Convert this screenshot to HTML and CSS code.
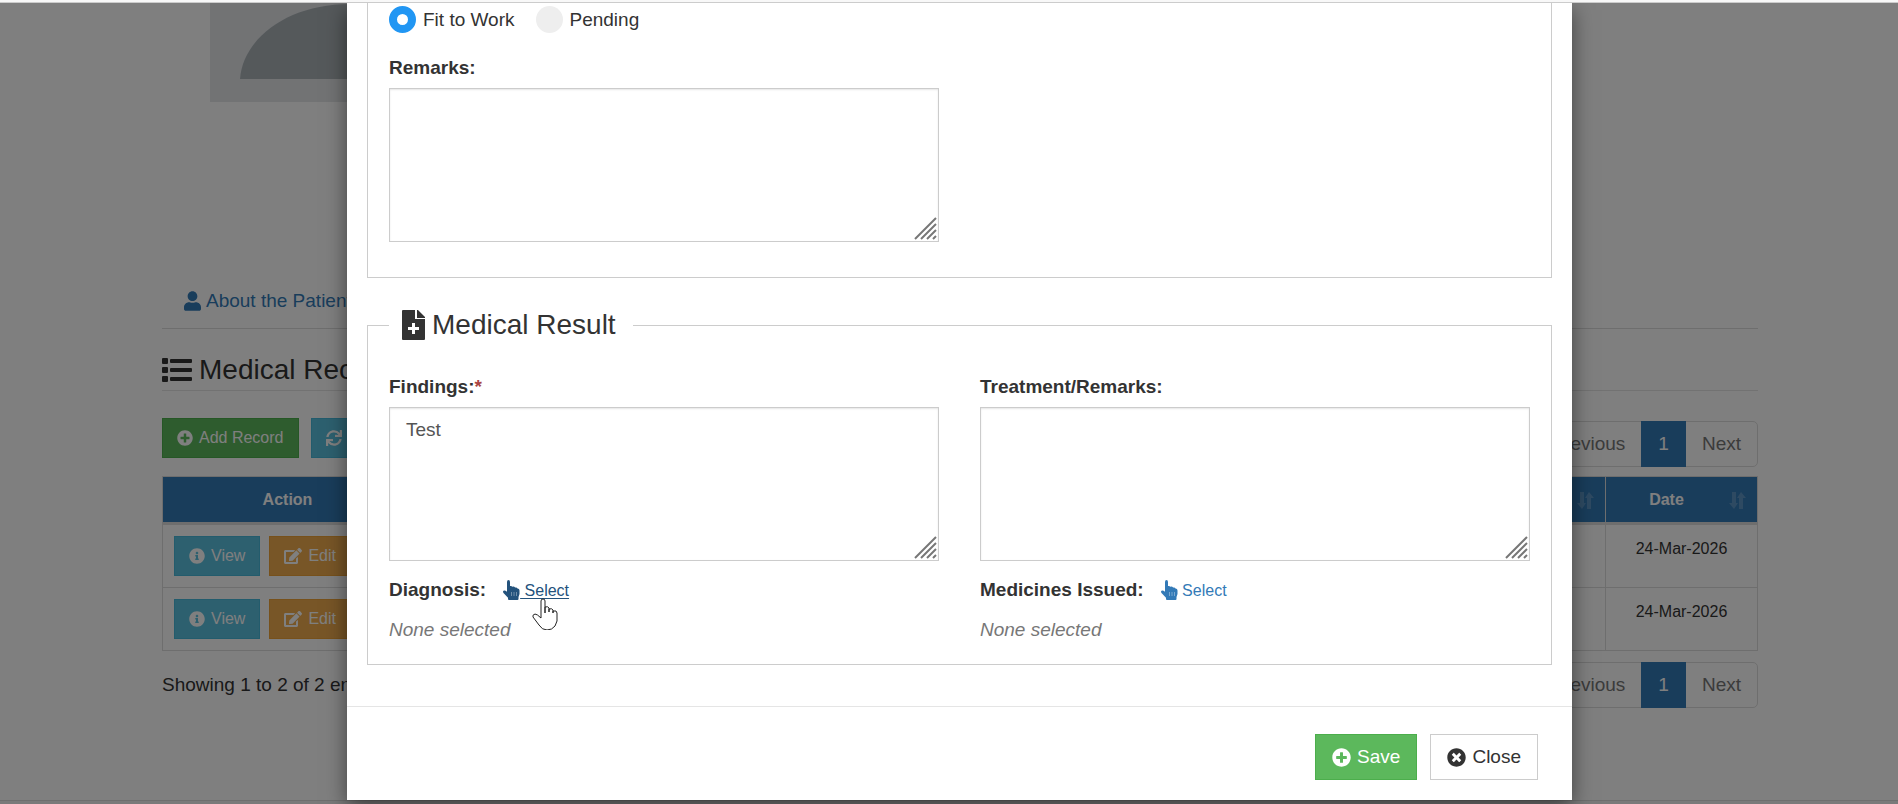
FILE: index.html
```html
<!DOCTYPE html>
<html lang="en">
<head>
<meta charset="utf-8">
<title>Medical Records</title>
<link rel="stylesheet" href="styles.css">
</head>
<body>
<svg class="sprite" aria-hidden="true">
  <symbol id="i-user" viewBox="0 0 448 512"><path d="M224 256c70.700 0 128-57.300 128-128S294.700 0 224 0 96 57.300 96 128s57.300 128 128 128zm89.600 32h-16.700c-22.200 10.200-46.900 16-72.900 16s-50.600-5.800-72.900-16h-16.700C60.200 288 0 348.200 0 422.400V464c0 26.500 21.500 48 48 48h352c26.500 0 48-21.500 48-48v-41.600c0-74.200-60.200-134.400-134.400-134.400z"/></symbol>
  <symbol id="i-list" viewBox="0 0 30 24"><path d="M1 0h4q1 0 1 1v4q0 1-1 1H1Q0 6 0 5V1q0-1 1-1zM1 9h4q1 0 1 1v4q0 1-1 1H1q-1 0-1-1v-4q0-1 1-1zM1 18h4q1 0 1 1v4q0 1-1 1H1q-1 0-1-1v-4q0-1 1-1zM9 1h20q1 0 1 1v2q0 1-1 1H9Q8 5 8 4V2q0-1 1-1zM9 10h20q1 0 1 1v2q0 1-1 1H9q-1 0-1-1v-2q0-1 1-1zM9 19h20q1 0 1 1v2q0 1-1 1H9q-1 0-1-1v-2q0-1 1-1z"/></symbol>
  <symbol id="i-plus" viewBox="0 0 512 512"><path d="M256 8C119 8 8 119 8 256s111 248 248 248 248-111 248-248S393 8 256 8zm144 276c0 6.600-5.400 12-12 12h-92v92c0 6.600-5.400 12-12 12h-56c-6.600 0-12-5.400-12-12v-92h-92c-6.600 0-12-5.400-12-12v-56c0-6.600 5.400-12 12-12h92v-92c0-6.600 5.400-12 12-12h56c6.600 0 12 5.400 12 12v92h92c6.600 0 12 5.400 12 12v56z"/></symbol>
  <symbol id="i-times" viewBox="0 0 512 512"><path d="M256 8C119 8 8 119 8 256s111 248 248 248 248-111 248-248S393 8 256 8zm121.600 313.100c4.700 4.700 4.700 12.300 0 17L338 377.600c-4.700 4.700-12.300 4.700-17 0L256 312l-65.100 65.600c-4.700 4.700-12.300 4.700-17 0L134.400 338c-4.700-4.700-4.700-12.300 0-17l65.600-65-65.600-65.100c-4.700-4.700-4.700-12.300 0-17l39.600-39.600c4.700-4.700 12.300-4.700 17 0l65 65.700 65.100-65.600c4.700-4.700 12.300-4.700 17 0l39.600 39.600c4.700 4.700 4.700 12.300 0 17L312 256l65.600 65.100z"/></symbol>
  <symbol id="i-info" viewBox="0 0 512 512"><path d="M256 8C119 8 8 119 8 256s111 248 248 248 248-111 248-248S393 8 256 8zm0 110c23.200 0 42 18.800 42 42s-18.800 42-42 42-42-18.800-42-42 18.800-42 42-42zm56 254c0 6.600-5.400 12-12 12h-88c-6.600 0-12-5.400-12-12v-24c0-6.600 5.400-12 12-12h12v-64h-12c-6.600 0-12-5.400-12-12v-24c0-6.600 5.400-12 12-12h64c6.600 0 12 5.400 12 12v100h12c6.600 0 12 5.400 12 12v24z"/></symbol>
  <symbol id="i-edit" viewBox="0 0 576 512"><path d="M402.600 83.200l90.200 90.200c3.800 3.800 3.800 10 0 13.800L274.400 405.600l-92.800 10.300c-12.400 1.400-22.900-9.100-21.500-21.500l10.300-92.800L388.800 83.200c3.800-3.800 10-3.800 13.800 0zm162-22.900l-48.800-48.800c-15.200-15.200-39.900-15.200-55.200 0l-35.400 35.400c-3.800 3.800-3.800 10 0 13.800l90.200 90.200c3.800 3.800 10 3.800 13.800 0l35.400-35.400c15.200-15.300 15.200-40 0-55.200zM384 346.200V448H64V128h229.800c3.200 0 6.200-1.300 8.500-3.500l40-40c7.600-7.600 2.200-20.500-8.500-20.500H48C21.500 64 0 85.500 0 112v352c0 26.500 21.500 48 48 48h352c26.500 0 48-21.500 48-48V306.200c0-10.700-12.900-16-20.500-8.500l-40 40c-2.200 2.300-3.500 5.300-3.500 8.500z"/></symbol>
  <symbol id="i-sync" viewBox="0 0 512 512"><path d="M440.650 12.570l4 82.770A247.160 247.160 0 0 0 255.830 8C134.730 8 33.910 94.920 12.290 209.820A12 12 0 0 0 24.090 224h49.050a12 12 0 0 0 11.670-9.260 175.910 175.910 0 0 1 317-56.940l-101.460-4.860a12 12 0 0 0-12.570 12v47.410a12 12 0 0 0 12 12H500a12 12 0 0 0 12-12V12a12 12 0 0 0-12-12h-47.370a12 12 0 0 0-11.980 12.570zM255.830 432a175.610 175.610 0 0 1-146-77.800l101.800 4.870a12 12 0 0 0 12.570-12v-47.400a12 12 0 0 0-12-12H12a12 12 0 0 0-12 12V500a12 12 0 0 0 12 12h47.350a12 12 0 0 0 12-12.600l-4.150-82.570A247.170 247.170 0 0 0 255.830 504c121.110 0 221.930-86.920 243.550-201.820a12 12 0 0 0-11.800-14.180h-49.050a12 12 0 0 0-11.670 9.260A175.860 175.860 0 0 1 255.830 432z"/></symbol>
  <symbol id="i-sort" viewBox="0 0 17 17"><path d="M3 0h4v11h2l-4 6-5-6h3zM10 17h4V6h3l-5-6-4 6h2z"/></symbol>
  <symbol id="i-file" viewBox="0 0 23 30"><path fill-rule="evenodd" d="M1 0h12v9h10v20q0 1-1 1H1q-1 0-1-1V1q0-1 1-1zM10 13v4H6v3h4v4h3v-4h4v-3h-4v-4zM15 0h1l7 7v1h-8z"/></symbol>
  <symbol id="i-hand" viewBox="0 0 17 20"><path d="M4 2q0-2 1.500-2T7 2v4q1.500-.4 2.500.8 1.500-.6 2.600.7Q14 7 14.500 8.500q2 0 2 2v3.500L15.500 17v2q0 1-1 1H6q-1 0-1-1v-1.300L.5 13q-1-1.500 0-2.300Q2 10 4 11.800z"/><path class="hand-lines" d="M8.500 12v4M11 12v4M13.500 12v4"/></symbol>
  <symbol id="i-grip" viewBox="0 0 24 24"><path d="M1 22L22 1M7 22L22 7M13 22l9-9M19 22l3-3"/></symbol>
</svg>

<div class="page">
  <div class="topbar"></div>
  <main class="content">
    <svg class="avatar" viewBox="0 0 300 99"><path class="avatar-bg" d="M0 0h300v99H0z"/><path class="avatar-body" d="M30 76C33 35 78 1 140 1h20c62 0 107 34 110 75z"/></svg>
    <nav class="tabs">
      <a class="tab" href="#about"><svg class="icon-17"><use href="#i-user"/></svg>About the Patient</a>
    </nav>
    <h2 class="page-title"><svg class="icon-list"><use href="#i-list"/></svg>Medical Records</h2>
    <div class="toolbar">
      <div class="toolbar-buttons">
        <button class="btn btn-success" type="button"><svg class="icon-16"><use href="#i-plus"/></svg>Add Record</button>
        <button class="btn btn-info" type="button"><svg class="icon-16"><use href="#i-sync"/></svg>Refresh</button>
      </div>
      <nav class="pagination" aria-label="Pages, top"><a href="#prev">Previous</a><a class="current" href="#1">1</a><a href="#next">Next</a></nav>
    </div>
    <table class="records">
      <colgroup><col class="col-action"><col><col class="col-date"></colgroup>
      <thead>
        <tr><th>Action</th><th class="sortable"><svg class="icon-sort"><use href="#i-sort"/></svg></th><th class="sortable">Date<svg class="icon-sort"><use href="#i-sort"/></svg></th></tr>
      </thead>
      <tbody>
        <tr>
          <td><div class="actions"><button class="btn btn-info" type="button"><svg class="icon-16"><use href="#i-info"/></svg>View</button><button class="btn btn-warning" type="button"><svg class="icon-18"><use href="#i-edit"/></svg>Edit</button></div></td>
          <td></td><td>24-Mar-2026</td>
        </tr>
        <tr>
          <td><div class="actions"><button class="btn btn-info" type="button"><svg class="icon-16"><use href="#i-info"/></svg>View</button><button class="btn btn-warning" type="button"><svg class="icon-18"><use href="#i-edit"/></svg>Edit</button></div></td>
          <td></td><td>24-Mar-2026</td>
        </tr>
      </tbody>
    </table>
    <div class="table-foot">
      <p class="showing">Showing 1 to 2 of 2 entries</p>
      <nav class="pagination" aria-label="Pages, bottom"><a href="#prev">Previous</a><a class="current" href="#1">1</a><a href="#next">Next</a></nav>
    </div>
  </main>
  <footer class="site-footer"></footer>
</div>

<div class="overlay">
  <form class="modal" role="dialog" aria-label="Medical record">
    <div class="modal-body">
      <fieldset class="group group-open">
        <div class="radios">
          <label class="radio"><input type="radio" name="status" checked>Fit to Work</label>
          <label class="radio"><input type="radio" name="status">Pending</label>
        </div>
        <div class="columns">
          <div class="field">
            <label class="label" for="remarks">Remarks:</label>
            <div class="area"><textarea id="remarks"></textarea><svg class="grip"><use href="#i-grip"/></svg></div>
          </div>
        </div>
      </fieldset>
      <fieldset class="group group-result">
        <legend><span class="legend"><svg class="icon-file"><use href="#i-file"/></svg>Medical Result</span></legend>
        <div class="columns">
          <div class="field">
            <label class="label" for="findings">Findings:<span class="required">*</span></label>
            <div class="area"><textarea id="findings">Test</textarea><svg class="grip"><use href="#i-grip"/></svg></div>
            <div class="picker"><span class="label">Diagnosis:</span><a class="select-link is-hover" href="#diagnosis"><svg class="icon-hand"><use href="#i-hand"/></svg><span class="select-text">&nbsp;Select</span><svg class="cursor" viewBox="0 0 26 32"><path d="M9 18V3q0-2 2-2t2 2v12V9q3-1 4 1v4-3q3-1 4 1v3-2q4-1 4 2v8l-2 5q-3 4-8 4-5 0-8-5L1 19q-1-2 2-3 2 0 6 4z"/></svg></a></div>
            <p class="none">None selected</p>
          </div>
          <div class="field">
            <label class="label" for="treatment">Treatment/Remarks:</label>
            <div class="area"><textarea id="treatment"></textarea><svg class="grip"><use href="#i-grip"/></svg></div>
            <div class="picker"><span class="label">Medicines Issued:</span><a class="select-link" href="#medicines"><svg class="icon-hand"><use href="#i-hand"/></svg><span class="select-text">&nbsp;Select</span></a></div>
            <p class="none">None selected</p>
          </div>
        </div>
      </fieldset>
    </div>
    <div class="modal-footer">
      <button class="btn btn-large btn-success" type="button"><svg class="icon-19"><use href="#i-plus"/></svg>Save</button>
      <button class="btn btn-large btn-default" type="button"><svg class="icon-19"><use href="#i-times"/></svg>Close</button>
    </div>
  </form>
</div>
</body>
</html>
```
FILE: styles.css
```css
* { box-sizing: border-box; }

body {
  margin: 0;
  overflow: hidden;
  background: #fff;
  color: #333;
  font: 19px/27px "Liberation Sans", Arial, sans-serif;
}

p, h2 { margin: 0; }
a { color: #337ab7; text-decoration: none; }
svg { flex: none; fill: currentColor; }
.sprite { position: absolute; width: 0; height: 0; }
.icon-16 { width: 16px; height: 16px; }
.icon-17 { width: 17px; height: 20px; }
.icon-18 { width: 18px; height: 16px; }
.icon-19 { width: 19px; height: 19px; }
.icon-list { width: 30px; height: 24px; }
.icon-file { width: 23px; height: 30px; }
.icon-hand { width: 17px; height: 20px; }
.hand-lines { fill: none; stroke: #fff; stroke-width: 1; opacity: .35; }

/* Page */
.page { display: flex; flex-direction: column; min-height: 100vh; }
.topbar { height: 3px; background: #f8f8f8; border-bottom: 1px solid #ccc; }
.content { padding: 0 140px 92px 162px; }
.avatar { display: block; width: 300px; height: 99px; margin-left: 48px; }
.avatar-bg { fill: #e4e6e9; }
.avatar-body { fill: #aab2b7; }

.tabs { display: flex; margin-top: 171px; border-bottom: 1px solid #ddd; }
.tab { display: flex; align-items: center; gap: 5px; padding: 14px 22px; }

.page-title {
  display: flex;
  align-items: center;
  gap: 7px;
  margin-top: 20px;
  border-bottom: 1px solid #e5e5e5;
  font-size: 28px;
  font-weight: 400;
  line-height: 41px;
}

.toolbar { display: flex; justify-content: space-between; margin-top: 27px; }
.toolbar-buttons { display: flex; align-items: flex-start; gap: 12px; }

.btn {
  display: flex;
  align-items: center;
  gap: 6px;
  padding: 7px 14px;
  border: 1px solid;
  color: #fff;
  font: 16px/24px "Liberation Sans", Arial, sans-serif;
  white-space: nowrap;
}
.btn-large { padding: 9px 16px; font-size: 19px; line-height: 26px; }
.btn-success { background: #5cb85c; border-color: #4cae4c; }
.btn-info { background: #5bc0de; border-color: #46b8da; }
.btn-warning { background: #f0ad4e; border-color: #eea236; }
.btn-default { background: #fff; border-color: #ccc; color: #333; }

.pagination {
  display: flex;
  margin-top: 3px;
  border: 1px solid #ddd;
  border-radius: 5px;
  line-height: 26px;
}
.pagination a { padding: 9px 16px; color: #777; }
.pagination .current { margin: -1px 0; padding: 10px 17px; background: #337ab7; color: #fff; }

.records {
  width: 100%;
  margin-top: 9px;
  border: solid #ddd;
  border-width: 1px 0 0 1px;
  border-spacing: 0;
  table-layout: fixed;
  font-size: 16px;
  text-align: center;
}
.col-action { width: 280px; }
.col-date { width: 152px; }
.records th {
  position: relative;
  padding: 11px 41px 10px 11px;
  border: solid #ddd;
  border-width: 0 1px 3px 0;
  background: #337ab7;
  color: #fff;
  line-height: 24px;
}
.icon-sort { position: absolute; right: 11px; top: 15px; width: 17px; height: 17px; opacity: .2; }
.records td {
  padding: 11px;
  border: solid #ddd;
  border-width: 0 1px 1px 0;
  line-height: 25px;
  vertical-align: top;
}
.actions { display: flex; gap: 9px; }

.table-foot { display: flex; justify-content: space-between; align-items: flex-start; margin-top: 8px; }
.showing { margin-top: 12px; }
.site-footer { flex: 1; background: #f5f5f5; border-top: 1px solid #ddd; }

/* Modal */
.overlay {
  position: absolute;
  top: 3px;
  right: 0;
  bottom: 0;
  left: 0;
  overflow: hidden;
  padding: 0 326px 0 347px;
  background: rgba(0, 0, 0, .5);
}
.modal { background: #fff; box-shadow: 0 7px 20px rgba(0, 0, 0, .5); }
.modal-body { padding: 0 20px 41px; }
.group { min-width: 0; margin: 0; padding: 0 21px 21px; border: 1px solid #ccc; }
.group-open { padding: 3px 21px 35px; border-top: 0; }
.group-result { margin-top: 27px; }
legend { padding: 0; }
.legend { display: flex; align-items: center; gap: 7px; padding: 0 17px 0 13px; font-size: 28px; line-height: 40px; }
.group-result .columns { margin-top: 28px; }
.columns { display: grid; grid-template-columns: 1fr 1fr; gap: 41px; }

.radios { display: flex; gap: 21px; margin-bottom: 21px; }
.radio { display: flex; align-items: center; gap: 7px; }
.radio input {
  appearance: none;
  width: 27px;
  height: 27px;
  margin: 0;
  border-radius: 50%;
  background: #eee;
}
.radio input:checked { border: 8px solid #2196f3; background: #fff; }

.label { display: block; font-weight: 700; }
.required { color: #a94442; }
.area { position: relative; margin-top: 7px; }
textarea {
  display: block;
  width: 100%;
  height: 154px;
  padding: 8px 16px;
  border: 1px solid #ccc;
  border-radius: 0;
  box-shadow: inset 0 1px 2px rgba(0, 0, 0, .1);
  color: #555;
  font: inherit;
  resize: none;
}
.grip {
  position: absolute;
  right: 1px;
  bottom: 1px;
  width: 24px;
  height: 24px;
  fill: none;
  stroke: #777;
  stroke-width: 2;
  pointer-events: none;
}
.picker { display: flex; gap: 17px; margin-top: 15px; }
.select-link { position: relative; display: flex; align-items: center; font-size: 16px; }
.select-text { padding-top: 2px; line-height: 25px; }
.is-hover { color: #23527c; }
.is-hover .select-text { text-decoration: underline; text-underline-offset: 2px; }
.cursor {
  position: absolute;
  top: 22px;
  left: 29px;
  width: 26px;
  height: 32px;
  fill: #fff;
  stroke: #222;
  stroke-width: 1;
}
.none { margin-top: 13px; color: #777; font-style: italic; }
.modal-footer {
  display: flex;
  justify-content: flex-end;
  gap: 13px;
  padding: 27px 34px 20px;
  border-top: 1px solid #e5e5e5;
}
```
